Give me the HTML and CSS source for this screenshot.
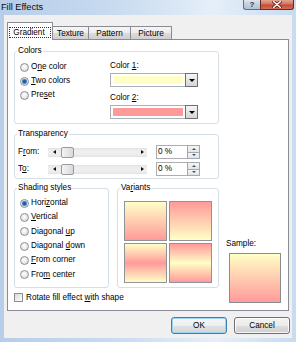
FILE: index.html
```html
<!DOCTYPE html>
<html>
<head>
<meta charset="utf-8">
<link rel="stylesheet" href="styles.css">
</head>
<body>
<div class="window">
  <div class="titlebar">
    <span class="title">Fill Effects</span>
    <div class="caption-btns">
      <span class="cap-btn help">?</span>
      <span class="cap-btn close"><svg width="10" height="7" viewBox="0 0 10 7"><path d="M1.5 0.5 L8.5 6.5 M8.5 0.5 L1.5 6.5" stroke="#5b1c12" stroke-width="3" stroke-linecap="round"/><path d="M1.5 0.5 L8.5 6.5 M8.5 0.5 L1.5 6.5" stroke="#fff" stroke-width="1.5" stroke-linecap="round"/></svg></span>
    </div>
  </div>
  <div class="client">
    <div class="tabs">
      <div class="tab active"><span class="focus">Gradient</span></div>
      <div class="tab w-texture">Texture</div>
      <div class="tab w-pattern">Pattern</div>
      <div class="tab w-picture">Picture</div>
    </div>
    <div class="panel">
      <fieldset class="group g-colors">
        <legend>Colors</legend>
        <div class="colors-body">
          <div class="radio-list">
            <div class="radio"><span class="rb"></span><span>O<u>n</u>e color</span></div>
            <div class="radio"><span class="rb on"></span><span><u>T</u>wo colors</span></div>
            <div class="radio"><span class="rb"></span><span>Pre<u>s</u>et</span></div>
          </div>
          <div class="pickers">
            <div class="lbl">Color <u>1</u>:</div>
            <div class="picker"><span class="swatch c1"></span><span class="drop"><i class="arrow-down"></i></span></div>
            <div class="lbl lbl2">Color <u>2</u>:</div>
            <div class="picker"><span class="swatch c2"></span><span class="drop"><i class="arrow-down"></i></span></div>
          </div>
        </div>
      </fieldset>

      <fieldset class="group g-trans">
        <legend>Transparency</legend>
        <div class="trans-body">
          <div class="trow">
            <span class="tlabel">F<u>r</u>om:</span>
            <div class="slider"><i class="arr-l"></i><span class="thumb"></span><i class="arr-r"></i></div>
            <span class="pct">0 %</span>
            <span class="spin"><span class="up"><i class="sp-up"></i></span><span class="dn"><i class="sp-dn"></i></span></span>
          </div>
          <div class="trow">
            <span class="tlabel">T<u>o</u>:</span>
            <div class="slider"><i class="arr-l"></i><span class="thumb"></span><i class="arr-r"></i></div>
            <span class="pct">0 %</span>
            <span class="spin"><span class="up"><i class="sp-up"></i></span><span class="dn"><i class="sp-dn"></i></span></span>
          </div>
        </div>
      </fieldset>

      <div class="lower">
        <div class="lower-left">
          <div class="groups-row">
            <fieldset class="group g-shading">
              <legend>Shading styles</legend>
              <div class="shading-body">
                <div class="radio r2"><span class="rb on"></span><span>Hori<u>z</u>ontal</span></div>
                <div class="radio r2"><span class="rb"></span><span><u>V</u>ertical</span></div>
                <div class="radio r2"><span class="rb"></span><span>Diagonal <u>u</u>p</span></div>
                <div class="radio r2"><span class="rb"></span><span>Diagonal <u>d</u>own</span></div>
                <div class="radio r2"><span class="rb"></span><span><u>F</u>rom corner</span></div>
                <div class="radio r2"><span class="rb"></span><span>Fro<u>m</u> center</span></div>
              </div>
            </fieldset>
            <fieldset class="group g-variants">
              <legend>Va<u>r</u>iants</legend>
              <div class="tiles">
                <span class="tile v1"></span>
                <span class="tile v2"></span>
                <span class="tile v3"></span>
                <span class="tile v4"></span>
              </div>
            </fieldset>
          </div>
          <div class="rotate"><span class="cb"></span><span>Rotate fill effect <u>w</u>ith shape</span></div>
        </div>
        <div class="sample-col">
          <div class="sample-lbl">Sample:</div>
          <div class="sample"></div>
        </div>
      </div>
    </div>
    <div class="buttons">
      <span class="btn default">OK</span>
      <span class="btn">Cancel</span>
    </div>
  </div>
</div>
</body>
</html>
```

FILE: styles.css
```css
* { box-sizing: border-box; }
html, body { margin: 0; padding: 0; }
body {
  width: 296px;
  height: 342px;
  overflow: hidden;
  font-family: "Liberation Sans", Arial, sans-serif;
  font-size: 8.2px;
  color: #000;
  background: #fff;
}
u { text-decoration: underline; text-underline-offset: 1px; }

.window {
  width: 296px;
  height: 342px;
  display: flex;
  flex-direction: column;
  background: linear-gradient(to right, #b7cde8 0%, #c6d9ef 35%, #dbe8f6 62%, #e6eff9 72%, #c8dbf0 100%);
}

/* title bar */
.titlebar {
  height: 15px;
  flex: none;
  display: flex;
  justify-content: space-between;
  align-items: flex-start;
}
.title {
  font-size: 9.2px;
  line-height: 14px;
  padding-left: 1px;
  color: #0b0b0b;
}
.caption-btns {
  display: flex;
  margin-right: 2px;
}
.cap-btn {
  height: 10px;
  display: flex;
  align-items: center;
  justify-content: center;
  border: 1px solid #5f6f86;
  border-top: none;
}
.help {
  width: 17px;
  border-radius: 0 0 0 3px;
  background: linear-gradient(#dfe6ee, #c3cfdc 50%, #b3c2d3);
  font-size: 8px;
  font-weight: bold;
  line-height: 9px;
  color: #2c3442;
  border-right: none;
}
.close {
  width: 34px;
  border-radius: 0 0 3px 0;
  border-color: #6b2a20;
  background: linear-gradient(#e3a493, #d27563 45%, #c24a36 55%, #d66e55);
}

/* client area */
.client {
  flex: 1;
  margin: 0 4px 4px 4px;
  background: #f0f0f0;
  display: flex;
  flex-direction: column;
}

.tabs {
  display: flex;
  align-items: flex-end;
  height: 17px;
  margin-top: 7px;
  padding-left: 3px;
}
.tab {
  height: 13px;
  border: 1px solid #898c95;
  border-bottom: none;
  border-left: none;
  background: linear-gradient(#f6f6f6, #ebebeb 50%, #dcdcdc 51%, #cfcfcf);
  display: flex;
  align-items: center;
  justify-content: center;
  padding-top: 1px;
  line-height: 10px;
}
.tab.active {
  width: 46px;
  height: 18px;
  margin-bottom: -1px;
  border-left: 1px solid #898c95;
  border-radius: 1px 1px 0 0;
  background: #fff;
  padding-top: 2px;
  position: relative;
  z-index: 1;
}
.focus {
  border: 1px dotted #333;
  padding: 0 5px 0 3px;
  line-height: 9px;
  height: 11px;
  display: flex;
  align-items: center;
}
.w-texture { width: 36px; }
.w-pattern { width: 42px; }
.w-picture { width: 41px; }

.panel {
  height: 272px;
  margin: 0 3px;
  background: #fff;
  border: 1px solid #898c95;
  padding: 6px 0 0 6px;
  display: flex;
  flex-direction: column;
}

/* group boxes */
.group {
  margin: 0;
  padding: 0;
  border: 1px solid #d5dfe5;
  border-radius: 3px;
  min-width: 0;
}
.group legend {
  margin-left: 2px;
  padding: 0 1px;
  line-height: 10px;
  height: 10px;
}
.g-colors { width: 205px; height: 78px; }
.g-trans { width: 205px; height: 50px; margin-top: 5px; }
.g-shading { width: 95px; height: 105px; }
.g-variants { width: 102px; height: 105px; }

/* colors */
.colors-body {
  display: grid;
  grid-template-columns: 90px 88px;
  padding-left: 5px;
}
.radio-list { margin-top: 4px; }
.radio {
  height: 14px;
  display: flex;
  align-items: center;
  line-height: 10px;
}
.radio.r2 { height: 14.3px; }
.rb {
  width: 9px;
  height: 9px;
  border-radius: 50%;
  border: 1px solid #8d9092;
  background: radial-gradient(circle at 45% 40%, #ffffff 0, #ececec 45%, #cfd0d1 100%);
  margin-right: 2px;
  flex: none;
}
.rb.on {
  background: radial-gradient(circle at 50% 50%, #1d4f8a 0, #2d6aae 1.6px, #7fb0e0 2.6px, #e9edf1 3.2px, #f5f5f5 100%);
}
.pickers {
  display: flex;
  flex-direction: column;
}
.lbl { line-height: 10px; height: 10px; margin-top: 5px; }
.lbl2 { margin-top: 6px; }
.picker {
  display: flex;
  height: 14px;
  margin-top: 2px;
  width: 88px;
}
.swatch {
  flex: 1;
  border: 1px solid #a9afb8;
  border-right: none;
  box-shadow: inset 0 0 0 2px #fff;
}
.c1 { background: #ffffc6; }
.c2 { background: #ff9a9a; }
.drop {
  width: 13px;
  border: 1px solid #6f6f6f;
  background: linear-gradient(#f7f7f7, #e4e4e4 50%, #d6d6d6);
  display: flex;
  align-items: center;
  justify-content: center;
}
.arrow-down {
  width: 0;
  height: 0;
  border-left: 3px solid transparent;
  border-right: 3px solid transparent;
  border-top: 3px solid #000;
}

/* transparency */
.trans-body { padding-left: 3px; padding-top: 6px; }
.trow {
  display: flex;
  align-items: center;
  height: 14px;
}
.trow + .trow { margin-top: 3px; }
.tlabel { width: 30px; line-height: 10px; }
.slider {
  width: 99px;
  height: 9px;
  background: linear-gradient(#e3e3e3, #eeeeee 30%, #eeeeee 70%, #e3e3e3);
  display: flex;
  align-items: center;
  padding: 0 3px 0 5px;
  margin-right: 9px;
}
.arr-l {
  width: 0; height: 0;
  border-top: 2.5px solid transparent;
  border-bottom: 2.5px solid transparent;
  border-right: 3px solid #111;
}
.arr-r {
  width: 0; height: 0;
  border-top: 2.5px solid transparent;
  border-bottom: 2.5px solid transparent;
  border-left: 3px solid #111;
}
.thumb {
  width: 13px;
  height: 11px;
  margin-left: 5px;
  margin-right: auto;
  border: 1px solid #979ba1;
  border-radius: 2px;
  background: linear-gradient(to right, #f4f4f4, #e6e6e6 50%, #d9d9d9);
}
.pct {
  width: 31px;
  height: 14px;
  border: 1px solid #abadb3;
  border-right: none;
  background: #fff;
  line-height: 12px;
  padding-left: 1px;
}
.spin {
  width: 13px;
  height: 14px;
  display: flex;
  flex-direction: column;
}
.spin .up, .spin .dn {
  flex: 1;
  border: 1px solid #a2a8b0;
  background: linear-gradient(#f6f6f6, #e4e4e4);
  display: flex;
  align-items: center;
  justify-content: center;
}
.spin .dn { border-top: none; }
.sp-up {
  width: 0; height: 0;
  border-left: 2.5px solid transparent;
  border-right: 2.5px solid transparent;
  border-bottom: 2.5px solid #3b5370;
}
.sp-dn {
  width: 0; height: 0;
  border-left: 2.5px solid transparent;
  border-right: 2.5px solid transparent;
  border-top: 2.5px solid #3b5370;
}

/* lower section */
.lower {
  display: flex;
  margin-top: 4px;
}
.groups-row {
  display: flex;
  gap: 8px;
}
.shading-body { padding-left: 5px; padding-top: 3px; }
.tiles {
  display: grid;
  grid-template-columns: 43px 43px;
  grid-template-rows: 40px 40px;
  gap: 2px;
  margin: 8px 0 0 6px;
}
.tile { border: 1px solid #8f949b; }
.v1 { background: linear-gradient(#ffffc6, #ff9a9a); }
.v2 { background: linear-gradient(#ff9a9a, #ffffc6); }
.v3 { background: linear-gradient(#ffffc6, #ff9a9a 50%, #ffffc6); }
.v4 { background: linear-gradient(#ff9a9a, #ffffc6 50%, #ff9a9a); }

.rotate {
  display: flex;
  align-items: center;
  height: 11px;
  margin-top: 4px;
  line-height: 10px;
}
.cb {
  width: 9px;
  height: 9px;
  border: 1px solid #8d9092;
  background: linear-gradient(135deg, #d6d7d8, #f4f4f4 70%, #ffffff);
  margin-right: 3px;
  flex: none;
}
.sample-col {
  margin-left: 7px;
  display: flex;
  flex-direction: column;
}
.sample-lbl {
  margin-top: 56px;
  line-height: 10px;
  height: 10px;
}
.sample {
  width: 52px;
  height: 50px;
  margin: 4px 0 0 3px;
  border: 1px solid #8a8d92;
  background: linear-gradient(#ffffc6, #ff9a9a);
}

/* buttons */
.buttons {
  display: flex;
  justify-content: flex-end;
  gap: 7px;
  margin-top: 6px;
  padding-right: 2px;
}
.btn {
  width: 56px;
  height: 17px;
  border: 1px solid #707070;
  border-radius: 3px;
  background: linear-gradient(#f2f2f2, #ebebeb 50%, #dddddd 51%, #cfcfcf);
  box-shadow: inset 0 0 0 1px rgba(255,255,255,0.8);
  display: flex;
  align-items: center;
  justify-content: center;
  line-height: 10px;
}
.btn.default {
  border-color: #3c7fb1;
  background: linear-gradient(#f4f6f8, #eceef0 50%, #dfe2e5 51%, #d2d5d9);
  box-shadow: inset 0 0 0 1px #9fd3f2;
}
```
